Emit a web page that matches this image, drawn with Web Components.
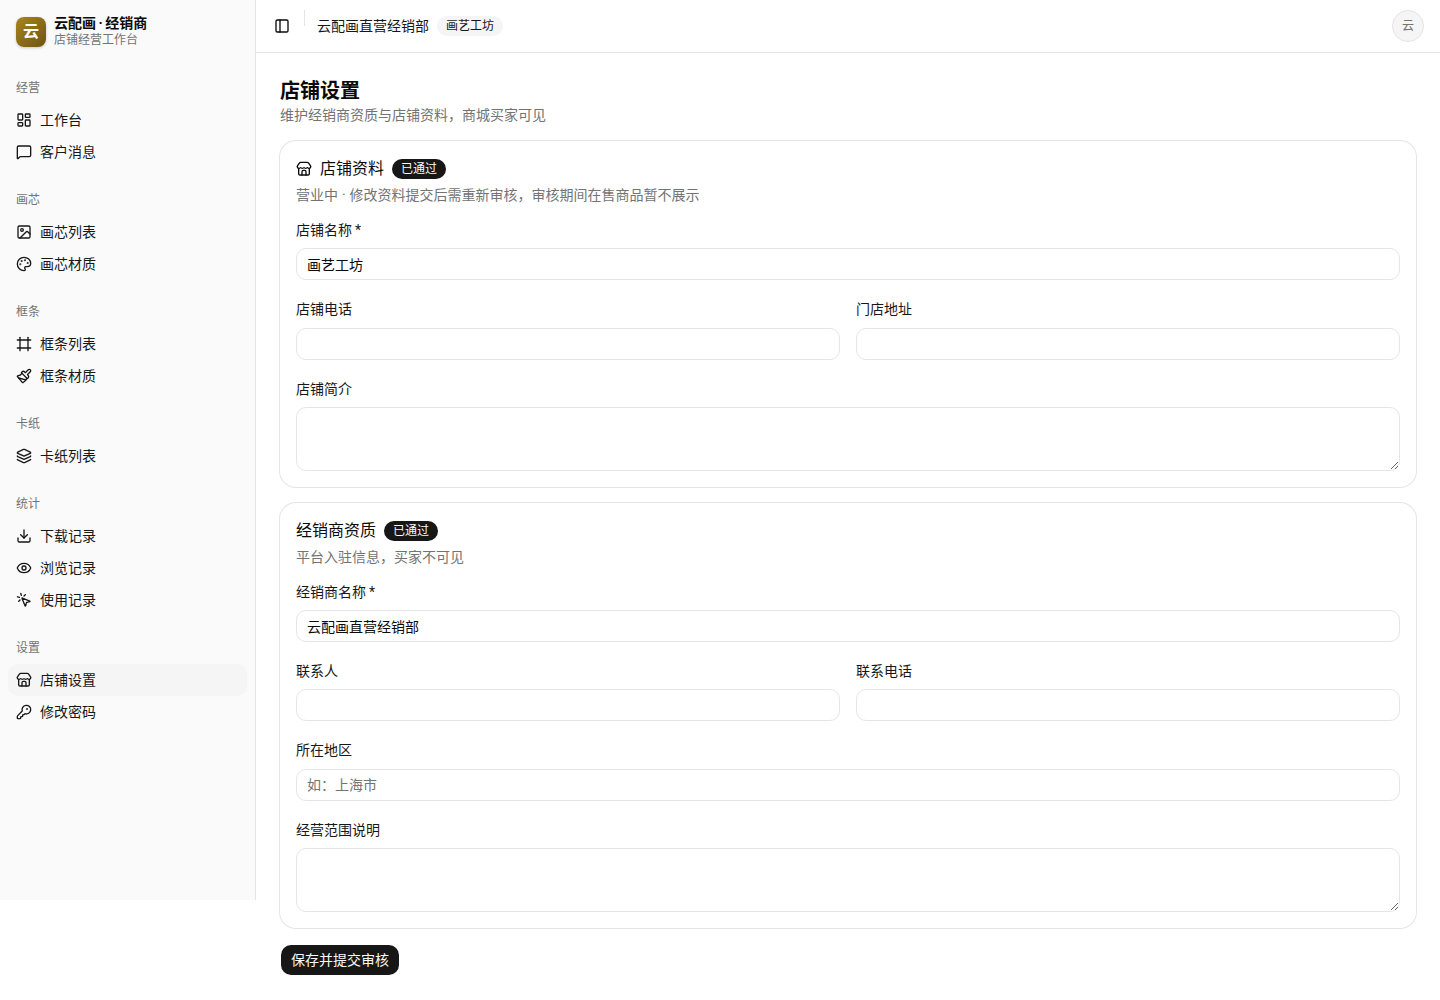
<!DOCTYPE html>
<html lang="zh-CN">
<head>
<meta charset="utf-8">
<title>店铺设置</title>
<style>
  html, body { margin: 0; background: #fff; }
  body {
    font-family: Roboto, "Noto Sans CJK SC", sans-serif;
    font-size: 14px;
    color: #0a0a0a;
  }
</style>
</head>
<body>
<app-shell>
  <app-sidebar slot="sidebar">
    <nav-group label="经营">
      <nav-item icon="dashboard">工作台</nav-item>
      <nav-item icon="message">客户消息</nav-item>
    </nav-group>
    <nav-group label="画芯">
      <nav-item icon="image">画芯列表</nav-item>
      <nav-item icon="palette">画芯材质</nav-item>
    </nav-group>
    <nav-group label="框条">
      <nav-item icon="frame">框条列表</nav-item>
      <nav-item icon="brush">框条材质</nav-item>
    </nav-group>
    <nav-group label="卡纸">
      <nav-item icon="layers">卡纸列表</nav-item>
    </nav-group>
    <nav-group label="统计">
      <nav-item icon="download">下载记录</nav-item>
      <nav-item icon="eye">浏览记录</nav-item>
      <nav-item icon="pointer">使用记录</nav-item>
    </nav-group>
    <nav-group label="设置">
      <nav-item icon="store" active>店铺设置</nav-item>
      <nav-item icon="key">修改密码</nav-item>
    </nav-group>
  </app-sidebar>

  <app-header slot="header" dealer="云配画直营经销部" shop="画艺工坊" avatar="云"></app-header>

  <page-title heading="店铺设置">维护经销商资质与店铺资料，商城买家可见</page-title>

  <form-card icon="store" heading="店铺资料" status="已通过" note="营业中 · 修改资料提交后需重新审核，审核期间在售商品暂不展示">
    <form-field label="店铺名称 *" value="画艺工坊" wide></form-field>
    <form-field label="店铺电话"></form-field>
    <form-field label="门店地址"></form-field>
    <form-field label="店铺简介" multiline wide></form-field>
  </form-card>

  <form-card heading="经销商资质" status="已通过" note="平台入驻信息，买家不可见">
    <form-field label="经销商名称 *" value="云配画直营经销部" wide></form-field>
    <form-field label="联系人"></form-field>
    <form-field label="联系电话"></form-field>
    <form-field label="所在地区" placeholder="如：上海市" wide></form-field>
    <form-field label="经营范围说明" multiline wide></form-field>
  </form-card>

  <save-button>保存并提交审核</save-button>
</app-shell>

<script>
// lucide shapes, 24 box
const ICONS = {
  dashboard: '<rect width="7" height="9" x="3" y="3" rx="1"/><rect width="7" height="5" x="14" y="3" rx="1"/><rect width="7" height="9" x="14" y="12" rx="1"/><rect width="7" height="5" x="3" y="16" rx="1"/>',
  message: '<path d="M22 17a2 2 0 0 1-2 2H6.828a2 2 0 0 0-1.414.586l-2.202 2.202A.71.71 0 0 1 2 21.286V5a2 2 0 0 1 2-2h16a2 2 0 0 1 2 2z"/>',
  image: '<rect width="18" height="18" x="3" y="3" rx="2" ry="2"/><circle cx="9" cy="9" r="2"/><path d="m21 15-3.086-3.086a2 2 0 0 0-2.828 0L6 21"/>',
  palette: '<path d="M12 22a1 1 0 0 1 0-20 10 9 0 0 1 10 9 5 5 0 0 1-5 5h-2.25a1.75 1.75 0 0 0-1.4 2.8l.3.4a1.75 1.75 0 0 1-1.4 2.8z"/><circle cx="13.5" cy="6.5" r=".5" fill="currentColor"/><circle cx="17.5" cy="10.5" r=".5" fill="currentColor"/><circle cx="6.5" cy="12.5" r=".5" fill="currentColor"/><circle cx="8.5" cy="7.5" r=".5" fill="currentColor"/>',
  frame: '<line x1="22" x2="2" y1="6" y2="6"/><line x1="22" x2="2" y1="18" y2="18"/><line x1="6" x2="6" y1="2" y2="22"/><line x1="18" x2="18" y1="2" y2="22"/>',
  brush: '<path d="m14.622 17.897-10.68-2.913"/><path d="M18.376 2.622a1 1 0 1 1 3.002 3.002L17.36 9.643a.5.5 0 0 0 0 .707l.944.944a2.41 2.41 0 0 1 0 3.408l-.944.944a.5.5 0 0 1-.707 0L8.354 7.348a.5.5 0 0 1 0-.707l.944-.944a2.41 2.41 0 0 1 3.408 0l.944.944a.5.5 0 0 0 .707 0z"/><path d="M9 8c-1.804 2.71-3.97 3.46-6.583 3.948a.507.507 0 0 0-.302.819l7.32 8.883a1 1 0 0 0 1.185.204C12.735 20.405 16 16.792 16 15"/>',
  layers: '<path d="M12.83 2.18a2 2 0 0 0-1.66 0L2.6 6.08a1 1 0 0 0 0 1.83l8.58 3.91a2 2 0 0 0 1.66 0l8.58-3.9a1 1 0 0 0 0-1.83z"/><path d="M2 12a1 1 0 0 0 .58.91l8.6 3.91a2 2 0 0 0 1.65 0l8.58-3.9A1 1 0 0 0 22 12"/><path d="M2 17a1 1 0 0 0 .58.91l8.6 3.91a2 2 0 0 0 1.65 0l8.58-3.9A1 1 0 0 0 22 17"/>',
  download: '<path d="M12 15V3"/><path d="M21 15v4a2 2 0 0 1-2 2H5a2 2 0 0 1-2-2v-4"/><path d="m7 10 5 5 5-5"/>',
  eye: '<path d="M2.062 12.348a1 1 0 0 1 0-.696 10.75 10.75 0 0 1 19.876 0 1 1 0 0 1 0 .696 10.75 10.75 0 0 1-19.876 0"/><circle cx="12" cy="12" r="3"/>',
  pointer: '<path d="M14 4.1 12 6"/><path d="m5.1 8-2.9-.8"/><path d="m6 12-1.9 2"/><path d="M7.2 2.2 8 5.1"/><path d="M9.037 9.69a.498.498 0 0 1 .653-.653l11 4.5a.5.5 0 0 1-.074.949l-4.349 1.041a1 1 0 0 0-.74.739l-1.04 4.35a.5.5 0 0 1-.95.074z"/>',
  store: '<path d="M15 21v-5a2 2 0 0 0-2-2h-2a2 2 0 0 0-2 2v5"/><path d="M17.774 10.31a1.12 1.12 0 0 0-1.549 0 2.5 2.5 0 0 1-3.451 0 1.12 1.12 0 0 0-1.548 0 2.5 2.5 0 0 1-3.452 0 1.12 1.12 0 0 0-1.549 0 2.5 2.5 0 0 1-3.77-3.248l2.889-4.184A2 2 0 0 1 7 2h10a2 2 0 0 1 1.653.873l2.895 4.192a2.5 2.5 0 0 1-3.774 3.244"/><path d="M4 10.95V19a2 2 0 0 0 2 2h12a2 2 0 0 0 2-2v-8.05"/>',
  key: '<path d="M2.586 17.414A2 2 0 0 0 2 18.828V21a1 1 0 0 0 1 1h3a1 1 0 0 0 1-1v-1a1 1 0 0 1 1-1h1a1 1 0 0 0 1-1v-1a1 1 0 0 1 1-1h.172a2 2 0 0 0 1.414-.586l.814-.814a6.5 6.5 0 1 0-4-4z"/><circle cx="16.5" cy="7.5" r=".5" fill="currentColor"/>',
  panel: '<rect width="18" height="18" x="3" y="3" rx="2"/><path d="M9 3v18"/>'
};

function iconSvg(name) {
  return `<svg xmlns="http://www.w3.org/2000/svg" width="16" height="16" viewBox="0 0 24 24" fill="none" stroke="currentColor" stroke-width="2" stroke-linecap="round" stroke-linejoin="round" style="display:block;flex:none">${ICONS[name] || ''}</svg>`;
}

class Base extends HTMLElement {
  constructor() {
    super();
    this.attachShadow({ mode: 'open' });
  }
  attr(name) {
    return this.getAttribute(name) || '';
  }
}

class AppShell extends Base {
  connectedCallback() {
    this.shadowRoot.innerHTML = `
      <style>
        :host { display: grid; grid-template-columns: 256px 1fr; align-items: start; }
        main { display: flex; flex-direction: column; gap: 15.95px; padding: 24px; }
      </style>
      <slot name="sidebar"></slot>
      <div>
        <slot name="header"></slot>
        <main><slot></slot></main>
      </div>`;
  }
}

class AppSidebar extends Base {
  connectedCallback() {
    this.shadowRoot.innerHTML = `
      <style>
        :host {
          display: block;
          box-sizing: border-box;
          width: 256px;
          height: 900px;
          background: #fafafa;
          border-right: 1px solid #e5e5e5;
        }
        .brand { height: 64px; box-sizing: border-box; padding: 17px 16px; display: flex; gap: 8px; }
        .logo {
          width: 30px; height: 30px; border-radius: 8px;
          background: linear-gradient(135deg, #a8851f, #6e5412);
          box-shadow: 0 1px 3px rgba(0,0,0,.2);
          color: #fff; font-size: 16px; font-weight: 700; line-height: 30px; text-align: center;
        }
        .name { font-size: 14px; font-weight: 700; line-height: 16px; margin-top: -2px; color: #0a0a0a; word-spacing: -1px; }
        .sub { font-size: 12px; line-height: 16px; margin-top: 1px; color: #737373; }
      </style>
      <div class="brand">
        <div class="logo">云</div>
        <div>
          <div class="name">云配画 · 经销商</div>
          <div class="sub">店铺经营工作台</div>
        </div>
      </div>
      <slot></slot>`;
  }
}

class NavGroup extends Base {
  connectedCallback() {
    this.shadowRoot.innerHTML = `
      <style>
        :host { display: block; padding: 8px; }
        .label {
          height: 32px; padding: 0 8px; line-height: 32px;
          font-size: 12px; color: #737373;
        }
      </style>
      <div class="label">${this.attr('label')}</div>
      <slot></slot>`;
  }
}

class NavItem extends Base {
  connectedCallback() {
    this.shadowRoot.innerHTML = `
      <style>
        :host { display: block; }
        a {
          height: 32px; box-sizing: border-box; padding: 0 8px;
          display: flex; align-items: center; gap: 8px;
          border-radius: 10px; font-size: 14px; line-height: 20px; color: #171717;
        }
        :host([active]) a { background: #f5f5f5; }
      </style>
      <a>${iconSvg(this.attr('icon'))}<span><slot></slot></span></a>`;
  }
}

class AppHeader extends Base {
  connectedCallback() {
    this.shadowRoot.innerHTML = `
      <style>
        :host {
          display: flex; align-items: center;
          height: 53px; box-sizing: border-box; padding: 0 16px 0 12px;
          border-bottom: 1px solid #e5e5e5;
        }
        .toggle { width: 28px; height: 28px; display: flex; align-items: center; justify-content: center; color: #0a0a0a; }
        .sep { width: 1px; height: 16px; background: #e5e5e5; margin: 0 12px 0 8px; align-self: flex-start; margin-top: 10px; }
        .dealer { font-size: 14px; line-height: 20px; color: #171717; }
        .pill {
          margin-left: 8px; height: 20px; padding: 0 9px; border-radius: 10px;
          background: #f5f5f5; font-size: 12px; line-height: 20px; color: #171717;
        }
        .avatar {
          margin-left: auto; width: 32px; height: 32px; box-sizing: border-box;
          border: 1px solid #e5e5e5; border-radius: 50%; background: #f5f5f5;
          text-align: center; line-height: 30px;
          font-size: 12px; color: #737373;
        }
      </style>
      <div class="toggle">${iconSvg('panel')}</div>
      <div class="sep"></div>
      <div class="dealer">${this.attr('dealer')}</div>
      <div class="pill">${this.attr('shop')}</div>
      <div class="avatar">${this.attr('avatar')}</div>`;
  }
}

class PageTitle extends Base {
  connectedCallback() {
    this.shadowRoot.innerHTML = `
      <style>
        :host { display: block; margin-bottom: .05px; }
        h1 { margin: 0; font-size: 20px; line-height: 28px; font-weight: 700; color: #0a0a0a; }
        p { margin: 0; font-size: 14px; line-height: 20px; color: #737373; }
      </style>
      <h1>${this.attr('heading')}</h1>
      <p><slot></slot></p>`;
  }
}

class FormCard extends Base {
  connectedCallback() {
    const icon = this.attr('icon');
    this.shadowRoot.innerHTML = `
      <style>
        :host {
          display: block; padding: 16px; border-radius: 16px;
          box-shadow: 0 0 0 1px #e5e5e5; background: #fff;
        }
        .head { display: flex; align-items: center; gap: 8px; height: 24px; font-size: 16px; line-height: 24px; color: #0a0a0a; }
        .note { margin-top: 4px; font-size: 14px; line-height: 20px; color: #737373; word-spacing: .5px; }
        .fields { margin-top: 15.65px; display: grid; grid-template-columns: 1fr 1fr; gap: 20px 16px; }
      </style>
      <div class="head">
        ${icon ? iconSvg(icon) : ''}
        <span>${this.attr('heading')}</span>
        <status-badge>${this.attr('status')}</status-badge>
      </div>
      <div class="note">${this.attr('note')}</div>
      <div class="fields"><slot></slot></div>`;
  }
}

class StatusBadge extends Base {
  connectedCallback() {
    this.shadowRoot.innerHTML = `
      <style>
        :host {
          display: inline-block; height: 20px; padding: 0 9px; border-radius: 10px;
          background: #171717; color: #fafafa; font-size: 12px; line-height: 20px;
        }
      </style>
      <slot></slot>`;
  }
}

class FormField extends Base {
  connectedCallback() {
    const ph = this.attr('placeholder');
    const control = this.hasAttribute('multiline')
      ? `<textarea></textarea>`
      : `<input type="text" value="${this.attr('value')}" placeholder="${ph}">`;
    this.shadowRoot.innerHTML = `
      <style>
        :host { display: flex; flex-direction: column; gap: 8px; min-width: 0; }
        :host([wide]) { grid-column: 1 / -1; }
        label { font-size: 14px; line-height: 18px; height: 19.45px; color: #171717; word-spacing: -.5px; }
        input, textarea {
          display: block; width: 100%; box-sizing: border-box; margin: 0;
          border: 1px solid #e5e5e5; border-radius: 10px; outline: none;
          background: #fff; color: #0a0a0a;
          font: 14px/20px Roboto, "Noto Sans CJK SC", sans-serif;
          padding: 5px 10px;
        }
        input { height: 32px; }
        textarea { height: 64px; resize: vertical; }
        ::placeholder { color: #737373; opacity: 1; }
      </style>
      <label>${this.attr('label')}</label>
      ${control}`;
  }
}

class SaveButton extends Base {
  connectedCallback() {
    this.shadowRoot.innerHTML = `
      <style>
        :host { display: block; margin: 1px 0 0 1px; }
        button {
          display: block; height: 30px; padding: 0 10px; border: 0; border-radius: 10px;
          background: #171717; color: #fafafa;
          font: 14px/30px Roboto, "Noto Sans CJK SC", sans-serif;
        }
      </style>
      <button type="button"><slot></slot></button>`;
  }
}

customElements.define('app-shell', AppShell);
customElements.define('app-sidebar', AppSidebar);
customElements.define('nav-group', NavGroup);
customElements.define('nav-item', NavItem);
customElements.define('app-header', AppHeader);
customElements.define('page-title', PageTitle);
customElements.define('form-card', FormCard);
customElements.define('status-badge', StatusBadge);
customElements.define('form-field', FormField);
customElements.define('save-button', SaveButton);
</script>
</body>
</html>
